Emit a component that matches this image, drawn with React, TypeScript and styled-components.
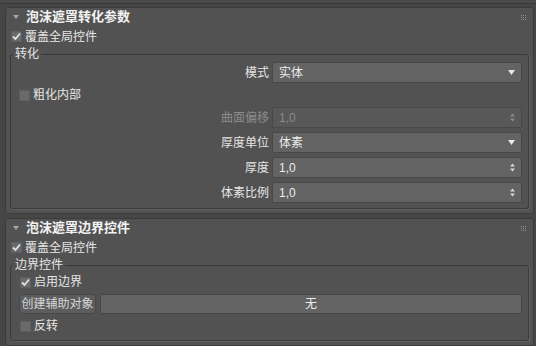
import React from 'react'
import styled, { createGlobalStyle } from 'styled-components'

const GlobalStyle = createGlobalStyle`
	html, body {
		margin: 0;
		background: #464646;
	}
	body {
		font-family: "Liberation Sans", "Noto Sans CJK SC", sans-serif;
		font-size: 12px;
		color: #e6e6e6;
	}
`

const Page = styled.div`
	width: 536px;
	height: 346px;
	overflow: hidden;
	background: #464646;
`

const TopEdge = styled.div`
	height: 3px;
	background: #4a4a4a;
	border-bottom: 1px solid #383838;
`

const Stack = styled.div`
	display: flex;
	flex-direction: column;
	gap: 4px;
	padding: 3px 2px 0 5px;
`

const Panel = styled.section`
	background: #525252;
	border: 1px solid #3b3b3b;
	border-radius: 3px;
	display: flex;
	flex-direction: column;
`

const Header = styled.div`
	height: 18px;
	display: flex;
	align-items: center;
	padding: 0 7px 0 7px;
`

const Caret = styled.span`
	width: 0;
	height: 0;
	border-left: 3px solid transparent;
	border-right: 3px solid transparent;
	border-top: 4px solid #a6a6a6;
	margin-right: 7px;
`

const Title = styled.span`
	font-size: 13px;
	font-weight: 700;
	line-height: 18px;
	color: #f2f2f2;
`

const Grip = styled.svg`
	margin-left: auto;
	display: block;
`

const CheckRow = styled.label<{ $h: number; $pad: number }>`
	display: flex;
	align-items: center;
	gap: 3px;
	height: ${(p) => p.$h}px;
	padding-left: ${(p) => p.$pad}px;
	line-height: 14px;
`

const Box = styled.span`
	width: 11px;
	height: 11px;
	box-sizing: border-box;
	background: #6a6a6a;
	border: 1px solid #5e5e5e;
	display: flex;
	align-items: center;
	justify-content: center;
`

const Group = styled.fieldset<{ $gap: number; $bottom: number }>`
	margin: 0 4px 4px 4px;
	padding: 1px 6px ${(p) => p.$bottom}px 8px;
	min-width: 0;
	border: 1px solid #3a3a3a;
	border-radius: 3px;
	box-shadow: 1px 1px 0 #606060;
	display: flex;
	flex-direction: column;
	gap: ${(p) => p.$gap}px;
`

const Legend = styled.legend`
	margin-left: -6px;
	padding: 0 2px;
	line-height: 14px;
	color: #e6e6e6;
`

const ParamRow = styled.div`
	display: grid;
	grid-template-columns: 1fr 250px;
	gap: 3px;
	align-items: center;
`

const Label = styled.span<{ $off?: boolean }>`
	text-align: right;
	line-height: 14px;
	color: ${(p) => (p.$off ? '#8c8c8c' : '#e6e6e6')};
`

const Field = styled.div<{ $off?: boolean; $center?: boolean }>`
	height: 21px;
	box-sizing: border-box;
	border: 1px solid #484848;
	border-radius: 2px;
	background: ${(p) => (p.$off ? '#585858' : '#636363')};
	color: ${(p) => (p.$off ? '#8a8a8a' : '#ececec')};
	display: flex;
	align-items: center;
	justify-content: ${(p) => (p.$center ? 'center' : 'space-between')};
	padding: 0 6px 0 6px;
	line-height: 14px;
`

const ButtonRow = styled.div`
	display: flex;
	gap: 4px;
`

const HelperButton = styled.button`
	height: 20px;
	width: 77px;
	padding: 0;
	box-sizing: border-box;
	border: 1px solid #484848;
	border-radius: 3px;
	background: #5d5d5d;
	color: #d6d6d6;
	font: inherit;
	line-height: 14px;
`

const PickField = styled(Field)`
	flex: 1;
	height: 20px;
`

const Check = () => (
	<svg width="9" height="9" viewBox="0 0 9 9">
		<path d="M1 4.5 L3.5 7 L8 1.5" fill="none" stroke="#e2e2e2" strokeWidth="1.8" />
	</svg>
)

const CheckBox: React.FC<{ checked?: boolean }> = ({ checked }) => (
	<Box>{checked && <Check />}</Box>
)

const DropArrow = () => (
	<svg width="7" height="5" viewBox="0 0 7 5">
		<path d="M0 0 H7 L3.5 5 Z" fill="#e8e8e8" />
	</svg>
)

const Spinner: React.FC<{ off?: boolean }> = ({ off }) => (
	<svg width="5" height="9" viewBox="0 0 5 9">
		<path d="M0 3.5 L2.5 0.5 L5 3.5 Z M0 5.5 H5 L2.5 8.5 Z" fill={off ? '#8a8a8a' : '#d8d8d8'} />
	</svg>
)

const GripDots = () => (
	<Grip width="5" height="5" viewBox="0 0 5 5">
		{[0, 2, 4].map((y) =>
			[0, 2, 4].map((x) => <rect key={`${x}-${y}`} x={x} y={y} width="1" height="1" fill="#8c8c8c" />)
		)}
	</Grip>
)

const PanelHeader: React.FC<{ title: string }> = ({ title }) => (
	<Header>
		<Caret />
		<Title>{title}</Title>
		<GripDots />
	</Header>
)

const params = [
	{ label: '曲面偏移', value: '1,0', kind: 'spin', off: true },
	{ label: '厚度单位', value: '体素', kind: 'drop' },
	{ label: '厚度', value: '1,0', kind: 'spin' },
	{ label: '体素比例', value: '1,0', kind: 'spin' },
]

export default function App() {
	return (
		<Page>
			<GlobalStyle />
			<TopEdge />
			<Stack>
				<Panel>
					<PanelHeader title="泡沫遮罩转化参数" />
					<CheckRow $h={21} $pad={5}>
						<CheckBox checked />
						覆盖全局控件
					</CheckRow>
					<Group $gap={4} $bottom={5}>
						<Legend>转化</Legend>
						<ParamRow>
							<Label>模式</Label>
							<Field>
								实体
								<DropArrow />
							</Field>
						</ParamRow>
						<CheckRow $h={16} $pad={0}>
							<CheckBox />
							粗化内部
						</CheckRow>
						{params.map((p) => (
							<ParamRow key={p.label}>
								<Label $off={p.off}>{p.label}</Label>
								<Field $off={p.off}>
									{p.value}
									{p.kind === 'drop' ? <DropArrow /> : <Spinner off={p.off} />}
								</Field>
							</ParamRow>
						))}
					</Group>
				</Panel>
				<Panel>
					<PanelHeader title="泡沫遮罩边界控件" />
					<CheckRow $h={21} $pad={5}>
						<CheckBox checked />
						覆盖全局控件
					</CheckRow>
					<Group $gap={3} $bottom={5}>
						<Legend>边界控件</Legend>
						<CheckRow $h={18} $pad={1}>
							<CheckBox checked />
							启用边界
						</CheckRow>
						<ButtonRow>
							<HelperButton>创建辅助对象</HelperButton>
							<PickField $center>无</PickField>
						</ButtonRow>
						<CheckRow $h={18} $pad={1}>
							<CheckBox />
							反转
						</CheckRow>
					</Group>
				</Panel>
			</Stack>
		</Page>
	)
}
